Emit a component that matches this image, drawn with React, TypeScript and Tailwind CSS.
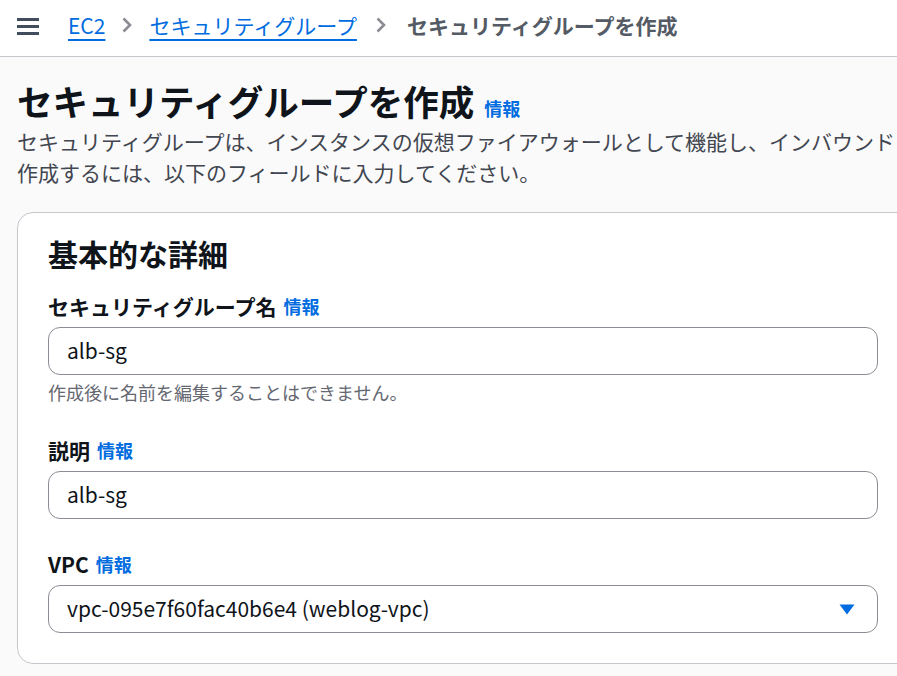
import React from "react";

const font = {
  fontFamily: '"Noto Sans CJK JP", "Noto Sans", sans-serif',
};

function Chevron() {
  return (
    <svg width="12" height="18" viewBox="0 0 12 18" className="shrink-0">
      <path d="M2.5 2.5 L9 9 L2.5 15.5" fill="none" stroke="#8c8c94" strokeWidth="2.6" strokeLinejoin="miter" />
    </svg>
  );
}

function Info() {
  return <span className="ml-[7px] text-[18px] font-bold text-[#006ce0]">情報</span>;
}

function Label({ children }: { children: React.ReactNode }) {
  return (
    <div className="flex h-[28px] items-center text-[21px] font-bold leading-[28px] text-[#0f141a]">
      {children}
    </div>
  );
}

function TextInput({ value }: { value: string }) {
  return (
    <div className="mt-[7px] flex h-[48px] w-[830px] items-center rounded-[12px] border border-[#8c8c94] bg-white pl-[18px] text-[21px] text-[#0f141a]">
      {value}
    </div>
  );
}

export default function App() {
  return (
    <div className="min-h-[676px] w-[897px] overflow-hidden bg-[#fafafa]" style={font}>
      <header className="flex h-[57px] items-center border-b border-[#c6c6cd] bg-white pb-[6px] pl-[17px]">
        <div className="mt-[3px] flex w-[22px] flex-col gap-[4.5px]">
          <span className="block h-[2.5px] bg-[#414d5c]" />
          <span className="block h-[2.5px] bg-[#414d5c]" />
          <span className="block h-[2.5px] bg-[#414d5c]" />
        </div>
        <nav className="ml-[29px] flex items-center text-[21px] leading-[28px]">
          <a className="text-[#006ce0] underline decoration-[2px] underline-offset-[5px]">EC2</a>
          <span className="mx-[16px]">
            <Chevron />
          </span>
          <a className="text-[#006ce0] underline decoration-[2px] underline-offset-[5px]">
            セキュリティグループ
          </a>
          <span className="ml-[18px] mr-[20px]">
            <Chevron />
          </span>
          <span className="font-bold text-[#545b64]">セキュリティグループを作成</span>
        </nav>
      </header>

      <main className="pl-[17px]">
        <div className="mt-[23px] flex items-baseline">
          <h1 className="text-[35.5px] font-bold leading-[42px] text-[#0f141a]">
            セキュリティグループを作成
          </h1>
          <span className="ml-[10px] text-[18px] font-bold text-[#006ce0]">情報</span>
        </div>
        <p className="mt-[4px] whitespace-nowrap text-[21px] leading-[31px] text-[#424650]">
          セキュリティグループは、インスタンスの仮想ファイアウォールとして機能し、インバウンドトラフィックとアウトバウンドトラフィックを制御します。新しいセキュリティグループを
          <br />
          作成するには、以下のフィールドに入力してください。
        </p>

        <section className="mt-[24px] w-[920px] rounded-[16px] border border-[#c6c6cd] bg-white pb-[30px] pl-[30px] pt-[22px]">
          <h2 className="text-[30px] font-bold leading-[36px] text-[#0f141a]">基本的な詳細</h2>

          <div className="mt-[21px]">
            <Label>
              セキュリティグループ名
              <Info />
            </Label>
            <TextInput value="alb-sg" />
            <div className="mt-[4px] text-[18px] leading-[26px] text-[#656871]">
              作成後に名前を編集することはできません。
            </div>
          </div>

          <div className="mt-[31px]">
            <Label>
              説明
              <Info />
            </Label>
            <TextInput value="alb-sg" />
          </div>

          <div className="mt-[31px]">
            <Label>
              VPC
              <Info />
            </Label>
            <div className="mt-[7px] flex h-[48px] w-[830px] items-center justify-between rounded-[12px] border border-[#8c8c94] bg-white pl-[18px] pr-[22px] text-[21px] text-[#0f141a]">
              <span>vpc-095e7f60fac40b6e4 (weblog-vpc)</span>
              <svg width="16" height="11" viewBox="0 0 16 11">
                <path d="M0.5 0.5 H15.5 L8 10.5 Z" fill="#006ce0" />
              </svg>
            </div>
          </div>
        </section>
      </main>
    </div>
  );
}
